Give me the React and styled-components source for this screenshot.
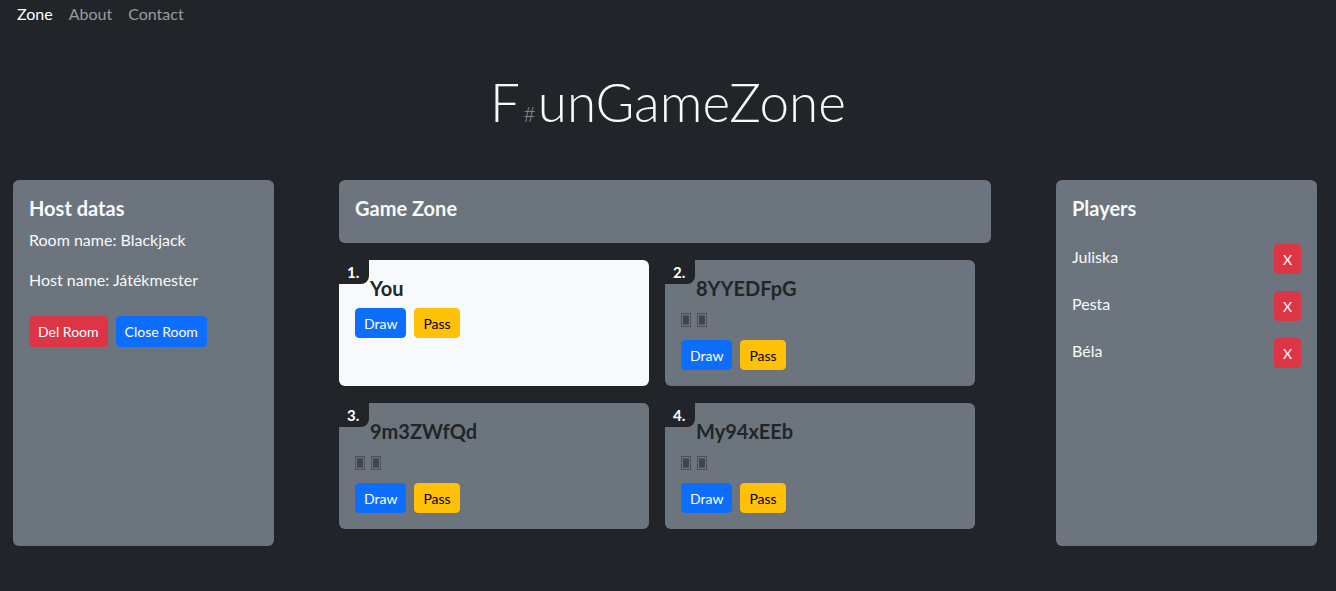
import React from 'react'
import styled, { createGlobalStyle } from 'styled-components'

const GlobalStyle = createGlobalStyle`
    html, body {
        margin: 0;
        padding: 0;
        background: #212529;
        font-family: "Lato", "Segoe UI", "Noto Sans", sans-serif;
        color: #f8f9fa;
    }
`

const players = [
    { id: 1, name: 'You', self: true },
    { id: 2, name: '8YYEDFpG' },
    { id: 3, name: '9m3ZWfQd' },
    { id: 4, name: 'My94xEEb' },
]

const lobby = ['Juliska', 'Pesta', 'Béla']

// hidden cards show up as missing glyph boxes in the original
const CardBack = () => (
    <svg width="10" height="14" viewBox="0 0 10 14">
        <rect x="0.5" y="0.5" width="9" height="13" fill="none" stroke="#4a5056" />
        <rect x="2" y="2" width="6" height="10" fill="#50565c" />
        <path d="M2 4h6M2 6h6M2 8h6M2 10h6" stroke="#2f3439" strokeWidth="1" />
    </svg>
)

export default function App() {
    return (
        <Page>
            <GlobalStyle />
            <Nav>
                <NavLink active>Zone</NavLink>
                <NavLink>About</NavLink>
                <NavLink>Contact</NavLink>
            </Nav>
            <Title>F<Sharp>#</Sharp>unGameZone</Title>
            <Main>
                <Panel>
                    <PanelTitle>Host datas</PanelTitle>
                    <Line>Room name: Blackjack</Line>
                    <Line>Host name: Játékmester</Line>
                    <ButtonRow top={24}>
                        <Button variant="danger" size="md">Del Room</Button>
                        <Button variant="primary" size="md">Close Room</Button>
                    </ButtonRow>
                </Panel>

                <Middle>
                    <Header>
                        <PanelTitle>Game Zone</PanelTitle>
                    </Header>
                    <GameGrid>
                        {players.map((p, i) => (
                            <GameCard key={p.id} self={p.self}>
                                <Badge>{i + 1}.</Badge>
                                <PlayerName>{p.name}</PlayerName>
                                {!p.self && (
                                    <Hand>
                                        <CardBack />
                                        <CardBack />
                                    </Hand>
                                )}
                                <ButtonRow>
                                    <Button variant="primary">Draw</Button>
                                    <Button variant="warning">Pass</Button>
                                </ButtonRow>
                            </GameCard>
                        ))}
                    </GameGrid>
                </Middle>

                <Panel>
                    <PanelTitle>Players</PanelTitle>
                    <PlayerList>
                        {lobby.map(name => (
                            <PlayerRow key={name}>
                                <span>{name}</span>
                                <Button variant="danger">X</Button>
                            </PlayerRow>
                        ))}
                    </PlayerList>
                </Panel>
            </Main>
        </Page>
    )
}

const Page = styled.div`
    min-height: 591px;
`

const Nav = styled.nav`
    display: flex;
    align-items: center;
    height: 27px;
    padding: 0 9px;
`

const NavLink = styled.a`
    padding: 0 8px;
    font-size: 16px;
    color: ${p => p.active ? '#fff' : 'rgba(255,255,255,.55)'};
`

const Title = styled.h1`
    margin: 32px 0 0;
    text-align: center;
    font-size: 53px;
    font-weight: 300;
    line-height: 86px;
    color: #f8f9fa;
`

const Sharp = styled.span`
    display: inline-block;
    margin: 0 2px 0 3px;
    font-size: 22px;
    line-height: 0;
    color: #868e96;
`

const Main = styled.main`
    display: grid;
    grid-template-columns: 261px 652px 261px;
    justify-content: space-between;
    align-items: start;
    padding: 0 19px 0 13px;
    margin-top: 35px;
`

const Panel = styled.section`
    background: #6c757d;
    border-radius: 6px;
    padding: 16px;
    height: 366px;
    box-sizing: border-box;
`

const PanelTitle = styled.h4`
    margin: 0 0 8px;
    font-size: 20px;
    font-weight: 700;
    line-height: 24px;
`

const Line = styled.p`
    margin: 0 0 16px;
    font-size: 16px;
    line-height: 24px;
`

const ButtonRow = styled.div`
    display: flex;
    gap: 8px;
    margin-top: ${p => p.top || 0}px;
`

const colors = {
    primary: ['#0d6efd', '#fff'],
    danger: ['#dc3545', '#fff'],
    warning: ['#ffc107', '#000'],
}

const Button = styled.button`
    box-sizing: border-box;
    height: ${p => p.size === 'md' ? 31 : 30}px;
    border: 1px solid ${p => colors[p.variant][0]};
    background: ${p => colors[p.variant][0]};
    color: ${p => colors[p.variant][1]};
    font-family: inherit;
    font-size: 14px;
    line-height: 21px;
    padding: 0 8px;
    border-radius: 4px;
`

const Middle = styled.div`
    display: flex;
    flex-direction: column;
    gap: 17px;
`

const Header = styled.div`
    background: #6c757d;
    border-radius: 6px;
    padding: 16px 16px 15px;
    height: 63px;
    box-sizing: border-box;
`

const GameGrid = styled.div`
    display: grid;
    grid-template-columns: 310px 310px;
    grid-auto-rows: 126px;
    gap: 17px 16px;
`

const GameCard = styled.div`
    position: relative;
    background: ${p => p.self ? '#f8f9fa' : '#6c757d'};
    border-radius: 6px;
    padding: 16px;
    box-sizing: border-box;
`

const Badge = styled.div`
    position: absolute;
    top: 0;
    left: 0;
    width: 30px;
    height: 24px;
    box-sizing: border-box;
    padding: 2px 0 0 8px;
    background: #212529;
    border-bottom-right-radius: 8px;
    color: #fff;
    font-size: 15px;
    font-weight: 700;
    line-height: 20px;
`

const PlayerName = styled.h5`
    margin: 0 0 8px 15px;
    font-size: 20px;
    font-weight: 700;
    line-height: 24px;
    color: #212529;
`

const Hand = styled.div`
    display: flex;
    gap: 6px;
    height: 24px;
    align-items: center;
    margin-bottom: 8px;
`

const PlayerList = styled.div`
    display: flex;
    flex-direction: column;
    gap: 17px;
    margin-top: 24px;
`

const PlayerRow = styled.div`
    display: flex;
    justify-content: space-between;
    align-items: center;
    font-size: 16px;
    & span {
        margin-top: -6px;
    }
`
